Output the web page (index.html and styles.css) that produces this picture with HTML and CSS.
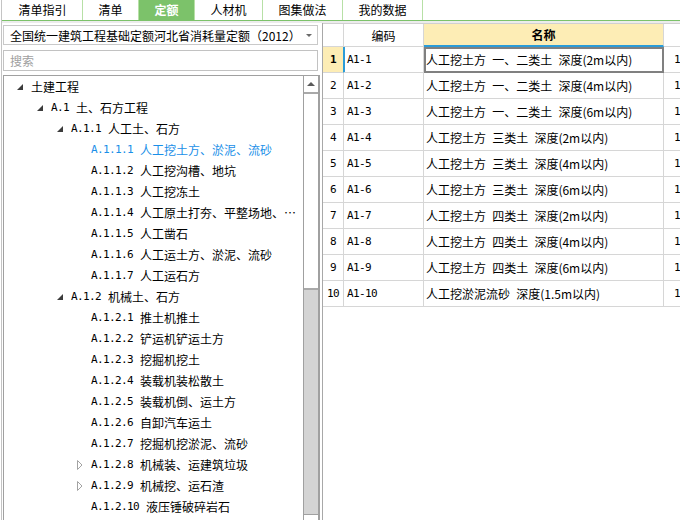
FILE: index.html
```html
<!DOCTYPE html>
<html lang="zh-CN">
<head>
<meta charset="utf-8">
<title>定额</title>
<link rel="stylesheet" href="styles.css">
</head>
<body>
<div class="app">
  <div class="tabs">
    <div class="tab">清单指引</div>
    <div class="tab">清单</div>
    <div class="tab active">定额</div>
    <div class="tab">人材机</div>
    <div class="tab">图集做法</div>
    <div class="tab">我的数据</div>
  </div>
  <div class="band"></div>
  <div class="main">
    <div class="left">
      <div class="select"><span>全国统一建筑工程基础定额河北省消耗量定额（2012）</span><span class="caret"></span></div>
      <div class="search">搜索</div>
      <div class="treebox">
        <div class="tree">
          <div class="row l0"><span class="tog"><i class="exp"></i></span><span class="txt">土建工程</span></div>
          <div class="row l1"><span class="tog"><i class="exp"></i></span><span class="code">A.1</span><span class="txt">土、石方工程</span></div>
          <div class="row l2"><span class="tog"><i class="exp"></i></span><span class="code">A.1.1</span><span class="txt">人工土、石方</span></div>
          <div class="row l3 sel"><span class="tog"></span><span class="code">A.1.1.1</span><span class="txt">人工挖土方、淤泥、流砂</span></div>
          <div class="row l3"><span class="tog"></span><span class="code">A.1.1.2</span><span class="txt">人工挖沟槽、地坑</span></div>
          <div class="row l3"><span class="tog"></span><span class="code">A.1.1.3</span><span class="txt">人工挖冻土</span></div>
          <div class="row l3"><span class="tog"></span><span class="code">A.1.1.4</span><span class="txt">人工原土打夯、平整场地、…</span></div>
          <div class="row l3"><span class="tog"></span><span class="code">A.1.1.5</span><span class="txt">人工凿石</span></div>
          <div class="row l3"><span class="tog"></span><span class="code">A.1.1.6</span><span class="txt">人工运土方、淤泥、流砂</span></div>
          <div class="row l3"><span class="tog"></span><span class="code">A.1.1.7</span><span class="txt">人工运石方</span></div>
          <div class="row l2"><span class="tog"><i class="exp"></i></span><span class="code">A.1.2</span><span class="txt">机械土、石方</span></div>
          <div class="row l3"><span class="tog"></span><span class="code">A.1.2.1</span><span class="txt">推土机推土</span></div>
          <div class="row l3"><span class="tog"></span><span class="code">A.1.2.2</span><span class="txt">铲运机铲运土方</span></div>
          <div class="row l3"><span class="tog"></span><span class="code">A.1.2.3</span><span class="txt">挖掘机挖土</span></div>
          <div class="row l3"><span class="tog"></span><span class="code">A.1.2.4</span><span class="txt">装载机装松散土</span></div>
          <div class="row l3"><span class="tog"></span><span class="code">A.1.2.5</span><span class="txt">装载机倒、运土方</span></div>
          <div class="row l3"><span class="tog"></span><span class="code">A.1.2.6</span><span class="txt">自卸汽车运土</span></div>
          <div class="row l3"><span class="tog"></span><span class="code">A.1.2.7</span><span class="txt">挖掘机挖淤泥、流砂</span></div>
          <div class="row l3"><span class="tog"><svg class="col" width="6" height="10" viewBox="0 0 6 10"><polygon points="0.5,0.5 5,5 0.5,9.5" fill="#fff" stroke="#a3a3a3" stroke-width="1"/></svg></span><span class="code">A.1.2.8</span><span class="txt">机械装、运建筑垃圾</span></div>
          <div class="row l3"><span class="tog"><svg class="col" width="6" height="10" viewBox="0 0 6 10"><polygon points="0.5,0.5 5,5 0.5,9.5" fill="#fff" stroke="#a3a3a3" stroke-width="1"/></svg></span><span class="code">A.1.2.9</span><span class="txt">机械挖、运石渣</span></div>
          <div class="row l3"><span class="tog"></span><span class="code">A.1.2.10</span><span class="txt">液压锤破碎岩石</span></div>
        </div>
        <div class="vscroll">
          <div class="sb-up"><span class="uptri"></span></div>
          <div class="sb-thumb"></div>
          <div class="sb-track"></div>
          <div class="sb-down"></div>
        </div>
      </div>
    </div>
    <div class="right">
      <div class="grid">
        <div class="c h num"></div>
        <div class="c h bm">编码</div>
        <div class="c h mc">名称</div>
        <div class="c h x"></div>

        <div class="c num cur">1</div><div class="c bm cur">A1-1</div><div class="c mc selcell">人工挖土方 一、二类土 深度(2m以内)</div><div class="c x">1</div>
        <div class="c num">2</div><div class="c bm">A1-2</div><div class="c mc">人工挖土方 一、二类土 深度(4m以内)</div><div class="c x">1</div>
        <div class="c num">3</div><div class="c bm">A1-3</div><div class="c mc">人工挖土方 一、二类土 深度(6m以内)</div><div class="c x">1</div>
        <div class="c num">4</div><div class="c bm">A1-4</div><div class="c mc">人工挖土方 三类土 深度(2m以内)</div><div class="c x">1</div>
        <div class="c num">5</div><div class="c bm">A1-5</div><div class="c mc">人工挖土方 三类土 深度(4m以内)</div><div class="c x">1</div>
        <div class="c num">6</div><div class="c bm">A1-6</div><div class="c mc">人工挖土方 三类土 深度(6m以内)</div><div class="c x">1</div>
        <div class="c num">7</div><div class="c bm">A1-7</div><div class="c mc">人工挖土方 四类土 深度(2m以内)</div><div class="c x">1</div>
        <div class="c num">8</div><div class="c bm">A1-8</div><div class="c mc">人工挖土方 四类土 深度(4m以内)</div><div class="c x">1</div>
        <div class="c num">9</div><div class="c bm">A1-9</div><div class="c mc">人工挖土方 四类土 深度(6m以内)</div><div class="c x">1</div>
        <div class="c num">10</div><div class="c bm">A1-10</div><div class="c mc">人工挖淤泥流砂 深度(1.5m以内)</div><div class="c x">1</div>
      </div>
    </div>
  </div>
</div>
</body>
</html>
```
FILE: styles.css
```css
html, body {
  margin: 0;
  padding: 0;
  width: 680px;
  height: 520px;
  overflow: hidden;
  background: #fff;
}
body {
  font-family: "Noto Sans CJK SC", "Noto Sans", sans-serif;
  font-size: 12px;
  color: #000;
}
.app {
  height: 520px;
  margin-left: 1px;
  border-left: 1px solid #c4c4c4;
  display: flex;
  flex-direction: column;
}
.tabs {
  height: 20px;
  display: flex;
  padding-left: 1px;
  border-bottom: 1px solid #7cc26a;
  flex: none;
}
.tab {
  padding: 0 15.5px;
  line-height: 20px;
  border-right: 1px solid #b7e0a6;
  white-space: nowrap;
}
.tab.active {
  background: #7cc26a;
  color: #fff;
  font-weight: bold;
}
.band {
  height: 2px;
  background: #ececec;
  flex: none;
}
.main {
  flex: 1;
  display: flex;
  min-height: 0;
}
.left {
  width: 317px;
  padding-left: 1px;
  display: flex;
  flex-direction: column;
  flex: none;
}
.select {
  margin-top: 2px;
  width: 315px;
  height: 20px;
  box-sizing: border-box;
  border: 1px solid #c9c9c9;
  padding: 0 5px 0 6px;
  display: flex;
  align-items: center;
  justify-content: space-between;
  white-space: nowrap;
}
.caret {
  width: 0;
  height: 0;
  border-left: 3px solid transparent;
  border-right: 3px solid transparent;
  border-top: 3px solid #6a6a6a;
}
.search {
  margin-top: 5px;
  width: 315px;
  height: 21px;
  box-sizing: border-box;
  border: 1px solid #c2c2c2;
  padding-left: 6px;
  line-height: 19px;
  color: #a0a0a0;
}
.treebox {
  margin-top: 4px;
  width: 317px;
  box-sizing: border-box;
  border: 1px solid #a0a0a0;
  flex: 1;
  margin-bottom: -20px;
  display: flex;
}
.tree {
  flex: 1;
  min-width: 0;
  overflow: hidden;
}
.row {
  height: 21px;
  display: flex;
  align-items: center;
  white-space: nowrap;
}
.row.l0 { padding-left: 7px; }
.row.l1 { padding-left: 27px; }
.row.l2 { padding-left: 47px; }
.row.l3 { padding-left: 67px; }
.tog {
  width: 20px;
  flex: none;
  display: flex;
  align-items: center;
  padding-left: 6px;
  box-sizing: border-box;
}
.exp {
  display: block;
  width: 0;
  height: 0;
  border-left: 6px solid transparent;
  border-bottom: 6px solid #3c3c3c;
  margin-top: 1px;
}
.col { display: block; }
.code {
  font-family: "DejaVu Sans Mono", "Liberation Mono", monospace;
  font-size: 11px;
  letter-spacing: -0.62px;
  margin-right: 7px;
}
.row.sel { color: #1a8fe8; }
.vscroll {
  width: 16px;
  flex: none;
  box-sizing: border-box;
  border-left: 1px solid #a0a0a0;
  border-right: 1px solid #a0a0a0;
  display: flex;
  flex-direction: column;
}
.sb-up {
  height: 18px;
  box-sizing: border-box;
  border-bottom: 2px solid #a9a9a9;
  display: flex;
  justify-content: center;
  align-items: center;
}
.uptri {
  width: 0;
  height: 0;
  border-left: 4px solid transparent;
  border-right: 4px solid transparent;
  border-bottom: 4px solid #5a5a5a;
}
.sb-thumb {
  height: 196px;
  box-sizing: border-box;
  border-bottom: 2px solid #a9a9a9;
  background: #fff;
}
.sb-track {
  height: 224px;
  background: #d4d4d4;
}
.sb-down {
  flex: 1;
  border-top: 1px solid #a0a0a0;
}
.right {
  flex: 1;
  margin-left: 2px;
  border-left: 1px solid #a8a8a8;
  overflow: hidden;
}
.grid {
  display: grid;
  grid-template-columns: 21px 80px 240px 80px;
  grid-template-rows: 23px;
  grid-auto-rows: 26px;
  border-top: 1px solid #d0d0d0;
  width: 421px;
}
.c {
  box-sizing: border-box;
  border-right: 1px solid #d6d6d6;
  border-bottom: 1px solid #d6d6d6;
  display: flex;
  align-items: center;
  white-space: nowrap;
  overflow: hidden;
}
.c.h {
  justify-content: center;
}
.c.h.mc {
  background: #fdedb5;
  font-weight: bold;
  border-bottom: 2px solid #2b9cd8;
}
.c.num {
  justify-content: center;
  font-family: "DejaVu Sans Mono", "Liberation Mono", monospace;
  font-size: 11px;
  letter-spacing: -0.62px;
}
.c.num.cur {
  background: #fdedb5;
  font-weight: bold;
  border-right-color: #2b9cd8;
}
.c.bm {
  padding-left: 3px;
  font-family: "DejaVu Sans Mono", "Liberation Mono", monospace;
  font-size: 11px;
  letter-spacing: -0.62px;
}
.c.h.bm {
  padding-left: 0;
  font-family: "Noto Sans CJK SC", sans-serif;
  font-size: 12px;
  letter-spacing: 0;
}
.c.bm.cur { box-shadow: inset 1px 0 0 #2b9cd8; }
.c.mc {
  padding-left: 2px;
  word-spacing: 3.5px;
}
.c.h.mc { padding-left: 0; }
.c.mc.selcell {
  outline: 2px solid #808080;
  outline-offset: -2px;
}
.c.x {
  padding-left: 10px;
  font-family: "DejaVu Sans Mono", "Liberation Mono", monospace;
  font-size: 11px;
  letter-spacing: -0.62px;
}
```
